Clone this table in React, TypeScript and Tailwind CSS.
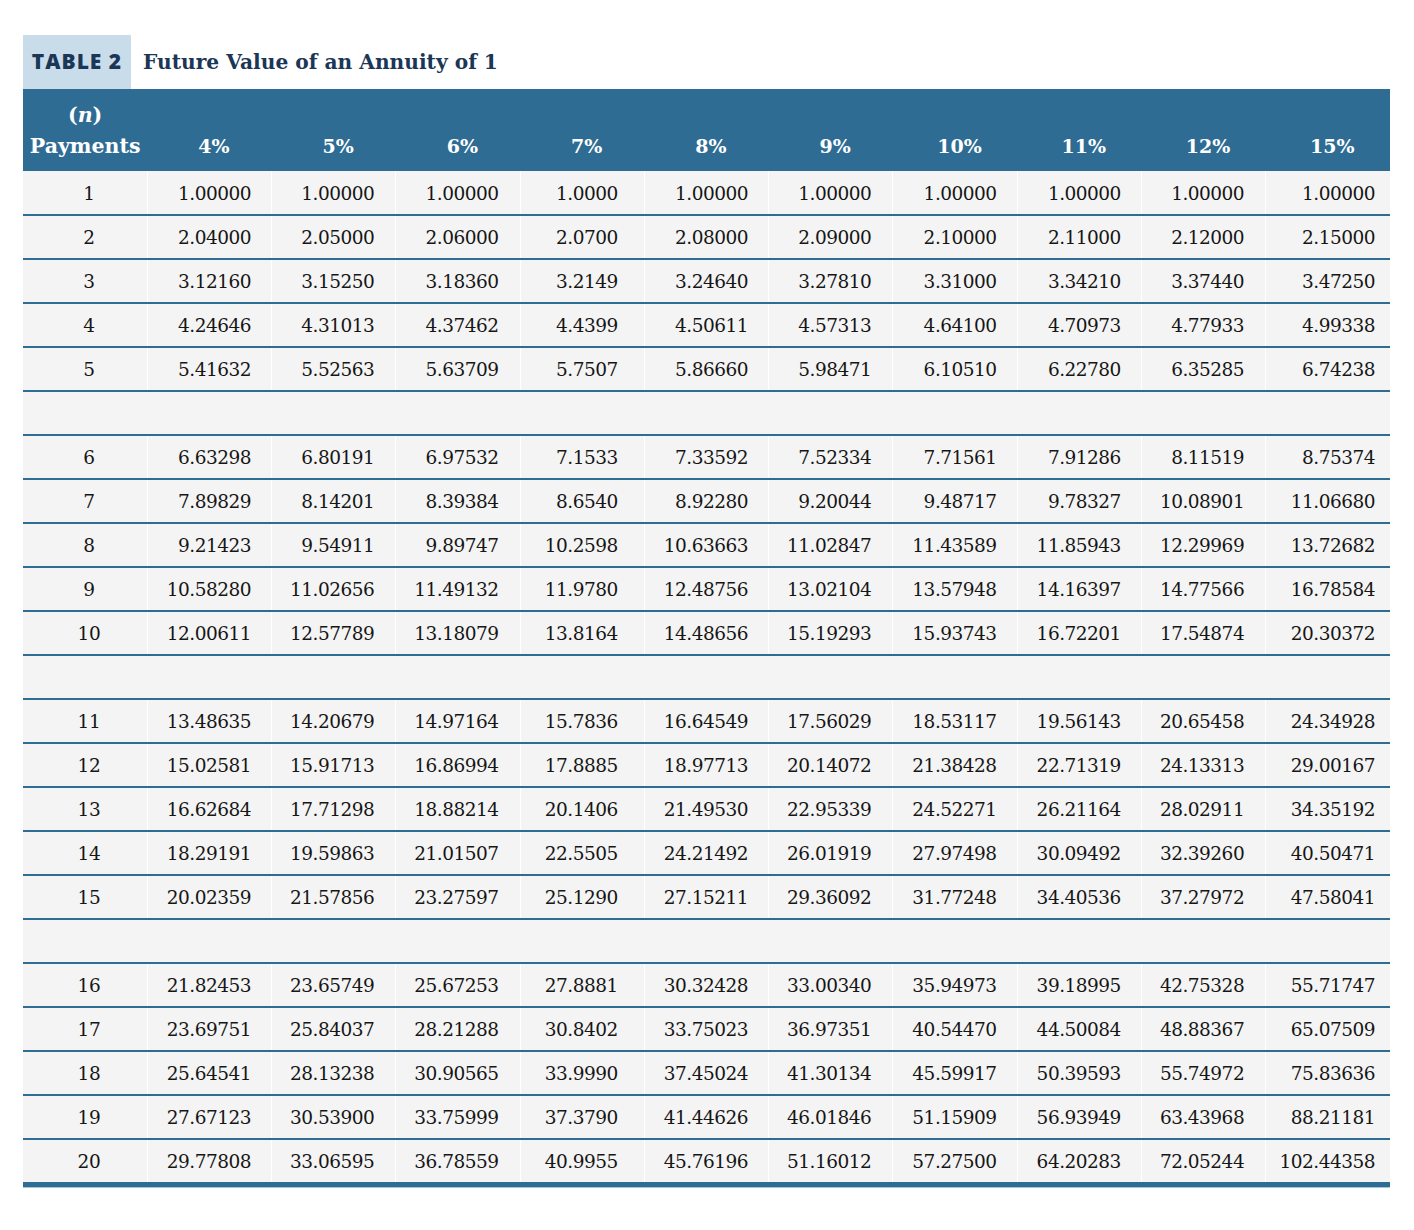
import React from 'react';

const rates = ['4%', '5%', '6%', '7%', '8%', '9%', '10%', '11%', '12%', '15%'];

// right padding per rate column, written out so tailwind picks them up
const pad = ['pr-[20px]', 'pr-[21px]', 'pr-[21px]', 'pr-[26px]', 'pr-[20px]', 'pr-[21px]', 'pr-[20px]', 'pr-[20px]', 'pr-[21px]', 'pr-[15px]'];

const rows: (string[] | null)[] = [
  ['1', '1.00000', '1.00000', '1.00000', '1.0000', '1.00000', '1.00000', '1.00000', '1.00000', '1.00000', '1.00000'],
  ['2', '2.04000', '2.05000', '2.06000', '2.0700', '2.08000', '2.09000', '2.10000', '2.11000', '2.12000', '2.15000'],
  ['3', '3.12160', '3.15250', '3.18360', '3.2149', '3.24640', '3.27810', '3.31000', '3.34210', '3.37440', '3.47250'],
  ['4', '4.24646', '4.31013', '4.37462', '4.4399', '4.50611', '4.57313', '4.64100', '4.70973', '4.77933', '4.99338'],
  ['5', '5.41632', '5.52563', '5.63709', '5.7507', '5.86660', '5.98471', '6.10510', '6.22780', '6.35285', '6.74238'],
  null,
  ['6', '6.63298', '6.80191', '6.97532', '7.1533', '7.33592', '7.52334', '7.71561', '7.91286', '8.11519', '8.75374'],
  ['7', '7.89829', '8.14201', '8.39384', '8.6540', '8.92280', '9.20044', '9.48717', '9.78327', '10.08901', '11.06680'],
  ['8', '9.21423', '9.54911', '9.89747', '10.2598', '10.63663', '11.02847', '11.43589', '11.85943', '12.29969', '13.72682'],
  ['9', '10.58280', '11.02656', '11.49132', '11.9780', '12.48756', '13.02104', '13.57948', '14.16397', '14.77566', '16.78584'],
  ['10', '12.00611', '12.57789', '13.18079', '13.8164', '14.48656', '15.19293', '15.93743', '16.72201', '17.54874', '20.30372'],
  null,
  ['11', '13.48635', '14.20679', '14.97164', '15.7836', '16.64549', '17.56029', '18.53117', '19.56143', '20.65458', '24.34928'],
  ['12', '15.02581', '15.91713', '16.86994', '17.8885', '18.97713', '20.14072', '21.38428', '22.71319', '24.13313', '29.00167'],
  ['13', '16.62684', '17.71298', '18.88214', '20.1406', '21.49530', '22.95339', '24.52271', '26.21164', '28.02911', '34.35192'],
  ['14', '18.29191', '19.59863', '21.01507', '22.5505', '24.21492', '26.01919', '27.97498', '30.09492', '32.39260', '40.50471'],
  ['15', '20.02359', '21.57856', '23.27597', '25.1290', '27.15211', '29.36092', '31.77248', '34.40536', '37.27972', '47.58041'],
  null,
  ['16', '21.82453', '23.65749', '25.67253', '27.8881', '30.32428', '33.00340', '35.94973', '39.18995', '42.75328', '55.71747'],
  ['17', '23.69751', '25.84037', '28.21288', '30.8402', '33.75023', '36.97351', '40.54470', '44.50084', '48.88367', '65.07509'],
  ['18', '25.64541', '28.13238', '30.90565', '33.9990', '37.45024', '41.30134', '45.59917', '50.39593', '55.74972', '75.83636'],
  ['19', '27.67123', '30.53900', '33.75999', '37.3790', '41.44626', '46.01846', '51.15909', '56.93949', '63.43968', '88.21181'],
  ['20', '29.77808', '33.06595', '36.78559', '40.9955', '45.76196', '51.16012', '57.27500', '64.20283', '72.05244', '102.44358'],
];

export default function App() {
  return (
    <div className="min-h-[1230px] bg-white pt-[35px] pl-[23px] font-['DejaVu_Serif',serif]">
      <div className="w-[1367px]">
        {/* Title */}
        <div className="flex items-stretch h-[54px]">
          <div className="bg-[#c9dcea] w-[108px] flex items-center justify-center">
            <span className="font-['Open_Sans',sans-serif] font-extrabold text-[21px] tracking-[1px] text-[#1b3656]">TABLE 2</span>
          </div>
          <div className="flex items-center pl-[12px] pt-[1px]">
            <span className="font-bold text-[20.2px] text-[#1b3656]">Future Value of an Annuity of 1</span>
          </div>
        </div>

        <table className="w-full table-fixed border-collapse text-[#161616]">
          <thead>
            <tr className="bg-[#2f6c94] text-white h-[82px]">
              <th className="align-bottom pb-[9px] font-bold text-[20.5px] leading-[31px]">
                <div>
                  (<span className="italic">n</span>)
                </div>
                <div>Payments</div>
              </th>
              {rates.map((r) => (
                <th key={r} className="align-bottom pb-[9px] font-bold text-[19px] leading-[31px] pl-[9px]">
                  {r}
                </th>
              ))}
            </tr>
          </thead>
          <tbody>
            {rows.map((row, i) => (
              <tr key={i} className="bg-[#f4f4f4] h-[44px] border-b-2 border-[#2f6c94]">
                {row === null ? (
                  <td colSpan={11}></td>
                ) : (
                  row.map((cell, j) =>
                    j === 0 ? (
                      <td key={j} className="text-center text-[18.5px] tracking-[-0.5px] pl-[8px] pt-[2px]">
                        {cell}
                      </td>
                    ) : (
                      <td key={j} className={`text-right text-[18.5px] tracking-[-0.5px] pt-[2px] border-l border-white ${pad[j - 1]}`}>
                        {cell}
                      </td>
                    )
                  )
                )}
              </tr>
            ))}
          </tbody>
        </table>
        <div className="h-[3px] bg-[#2f6c94]"></div>
        <div className="h-[1px] bg-[#a8c5db]"></div>
      </div>
    </div>
  );
}
